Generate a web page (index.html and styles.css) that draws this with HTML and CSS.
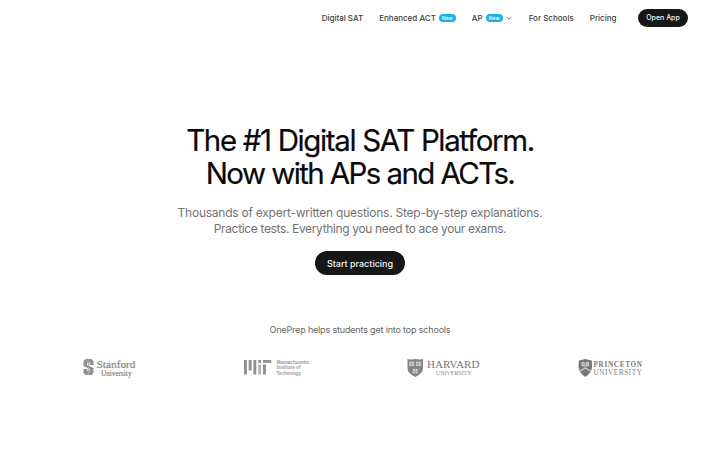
FILE: index.html
```html
<!DOCTYPE html>
<html lang="en">
<head>
    <meta charset="UTF-8">
    <meta name="viewport" content="width=device-width, initial-scale=1.0">
    <title>OnePrep</title>
    <link rel="stylesheet" href="styles.css">
</head>
<body>

    <header class="navbar">
        <nav class="nav-links">
            <a class="nav-link">Digital SAT</a>
            <a class="nav-link"><span>Enhanced ACT</span><span class="badge">New</span></a>
            <a class="nav-link"><span>AP</span><span class="badge">New</span>
                <svg class="chevron" viewBox="0 0 8 8"><path d="M1.600 2.800 L4 5.200 L6.400 2.800"/></svg>
            </a>
            <a class="nav-link">For Schools</a>
            <a class="nav-link">Pricing</a>
        </nav>
        <button class="open-button">Open App</button>
    </header>

    <main class="hero">
        <h1><span class="title-top">The #1 Digital SAT Platform.</span><span class="title-bottom">Now with APs and ACTs.</span></h1>
        <p class="subtitle"><span class="sub-top">Thousands of expert-written questions. Step-by-step explanations.</span><span class="sub-bottom">Practice tests. Everything you need to ace your exams.</span></p>
        <button class="start-button">Start practicing</button>
    </main>

    <section class="schools">
        <p class="schools-title">OnePrep helps students get into top schools</p>
        <div class="logos">
            <!-- Stanford -->
            <svg class="logo" width="54" height="22" viewBox="0 0 54 22">
                <path fill="#8f8f8f" d="M2.500 2h6l2 2v4H7v-2H4v2l6.500 3v5l-2 2h-6l-2-2v-4H4v2h3v-2L.5 9V4z"/>
                <path fill="none" stroke="#ababab" stroke-width=".8" d="M5.500 2v16M3.500 4l4 2M7.500 7l-4 2M3.500 12l4 2M7.500 15l-4 2"/>
                <text class="serif stanford" x="13.500" y="10.600" font-size="11" textLength="39" lengthAdjust="spacingAndGlyphs">Stanford</text>
                <text class="serif stanford" x="18" y="18.500" font-size="7.500" textLength="30.500" lengthAdjust="spacingAndGlyphs">University</text>
            </svg>
            <!-- MIT -->
            <svg class="logo" width="66" height="22" viewBox="0 0 66 22">
                <g fill="#8f8f8f">
                    <rect x="0" y="3" width="2.900" height="14.500"/>
                    <rect x="4.700" y="3" width="2.900" height="10.500"/>
                    <rect x="9.400" y="3" width="2.900" height="14.500"/>
                    <rect x="14.200" y="3" width="2.900" height="2.800"/>
                    <rect x="14.200" y="7.500" width="2.900" height="10" fill="#b2b2b2"/>
                    <rect x="19" y="7.500" width="2.900" height="10"/>
                    <rect x="19" y="3" width="8.300" height="2.800"/>
                </g>
                <g class="sans" font-size="4.600" fill="#9a9a9a">
                    <text x="32.500" y="6.600" textLength="32.500" lengthAdjust="spacingAndGlyphs">Massachusetts</text>
                    <text x="32.500" y="12.200" textLength="24" lengthAdjust="spacingAndGlyphs">Institute of</text>
                    <text x="32.500" y="17.800" textLength="24.500" lengthAdjust="spacingAndGlyphs">Technology</text>
                </g>
            </svg>
            <!-- Harvard -->
            <svg class="logo" width="74" height="22" viewBox="0 0 74 22">
                <path fill="#858585" d="M.5 2q3 .8 7.800 0 4.700.8 7.700 0v9q0 5.500-7.700 9Q.5 16.500.5 11z"/>
                <path fill="#d6d6d6" d="M2.200 4.700h5v4.300h-5zM9.200 4.700h5v4.300h-5zM5.700 12h5v4.300h-5z"/>
                <path stroke="#929292" stroke-width=".6" d="M4.700 4.500v5M11.700 4.500v5M8.200 12v4.500M2 6.900h12.500M5.500 14.200h5.500"/>
                <text class="serif" x="20" y="10.700" font-size="10.500" textLength="52.500" lengthAdjust="spacingAndGlyphs" fill="#757575">HARVARD</text>
                <text class="serif" x="29" y="18" font-size="6" textLength="35.500" lengthAdjust="spacingAndGlyphs" fill="#8a8a8a">UNIVERSITY</text>
            </svg>
            <!-- Princeton -->
            <svg class="logo" width="66" height="22" viewBox="0 0 66 22">
                <path fill="#777" d="M.8 3.500 3.300 3l4-1 4 1 2.500.5.300 6q0 6-6.800 10.500Q.5 15.500.5 9.500z"/>
                <path fill="#c9c9c9" d="M3.500 4.700l3.800.7 3.800-.7v4.300l-3.800.7-3.800-.7z"/>
                <path fill="none" stroke="#d2d2d2" stroke-width="1.200" d="M1.600 14.300 7.300 11l5.700 3.300"/>
                <path fill="none" stroke="#888" stroke-width=".6" d="M7.300 5v4.500M4.800 7h5"/>
                <text class="serif princeton" x="15.500" y="9.500" font-size="7.200" textLength="48.500" fill="#7b7b7b">PRINCETON</text>
                <text class="serif" x="15.500" y="18" font-size="7.200" textLength="48.500" fill="#808080">UNIVERSITY</text>
            </svg>
        </div>
    </section>

</body>
</html>
```

FILE: styles.css
```css
* {
    box-sizing: border-box;
}

body {
    margin: 0;
    background-color: #ffffff;
    font-family: Inter, sans-serif;
    overflow: hidden;
}

button {
    font-family: inherit;
    border: none;
    padding: 0;
    background-color: #171717;
    color: #f5f5f5;
    font-weight: 500;
    cursor: pointer;
}

.navbar {
    display: flex;
    justify-content: flex-end;
    align-items: center;
    height: 35px;
    padding-right: 32px;
}

.nav-links {
    display: flex;
    gap: 16px;
    margin-right: 21.5px;
}

.nav-link {
    display: flex;
    align-items: center;
    font-size: 8px;
    line-height: 12px;
    font-weight: 500;
    color: #404040;
    white-space: nowrap;
}

.badge {
    width: 17px;
    height: 8px;
    margin-left: 3px;
    border-radius: 4px;
    background-color: #1eaeea;
    color: #ffffff;
    font-size: 5px;
    line-height: 8px;
    text-align: center;
}

.chevron {
    width: 8px;
    height: 8px;
    margin-left: 2px;
    fill: none;
    stroke: #555555;
    stroke-width: 0.8;
}

.open-button {
    width: 50px;
    height: 18px;
    border-radius: 9px;
    font-size: 7px;
}

/* Hero */
.hero {
    display: flex;
    flex-direction: column;
    align-items: center;
    padding-top: 89px;
}

h1 {
    margin: 0;
    font-size: 29.5px;
    line-height: 33px;
    font-weight: 400;
    color: #0a0a0a;
    text-align: center;
    -webkit-text-stroke: 0.2px #0a0a0a;
}

h1 span,
.subtitle span {
    display: block;
    white-space: nowrap;
}

.title-top {
    letter-spacing: -1.36px;
}

.title-bottom {
    letter-spacing: -1.6px;
}

.subtitle {
    margin: 15px 0 0;
    font-size: 12px;
    line-height: 16px;
    color: #737373;
    text-align: center;
}

.sub-top {
    letter-spacing: -0.24px;
}

.sub-bottom {
    letter-spacing: -0.35px;
}

.start-button {
    width: 90px;
    height: 24px;
    margin-top: 14px;
    border-radius: 12px;
    font-size: 9px;
}

/* Schools */
.schools {
    padding: 48px 26px 0;
}

.schools-title {
    margin: 0;
    font-size: 9px;
    line-height: 14px;
    letter-spacing: -0.17px;
    color: #666666;
    text-align: center;
}

.logos {
    display: grid;
    grid-template-columns: repeat(4, 1fr);
    justify-items: center;
    margin-top: 20px;
}

.serif {
    font-family: "Liberation Serif", serif;
}

.stanford {
    fill: #858585;
    stroke: #858585;
    stroke-width: 0.2;
}

.sans {
    font-family: "Liberation Sans", sans-serif;
    font-weight: bold;
}

.princeton {
    font-weight: bold;
}
```
